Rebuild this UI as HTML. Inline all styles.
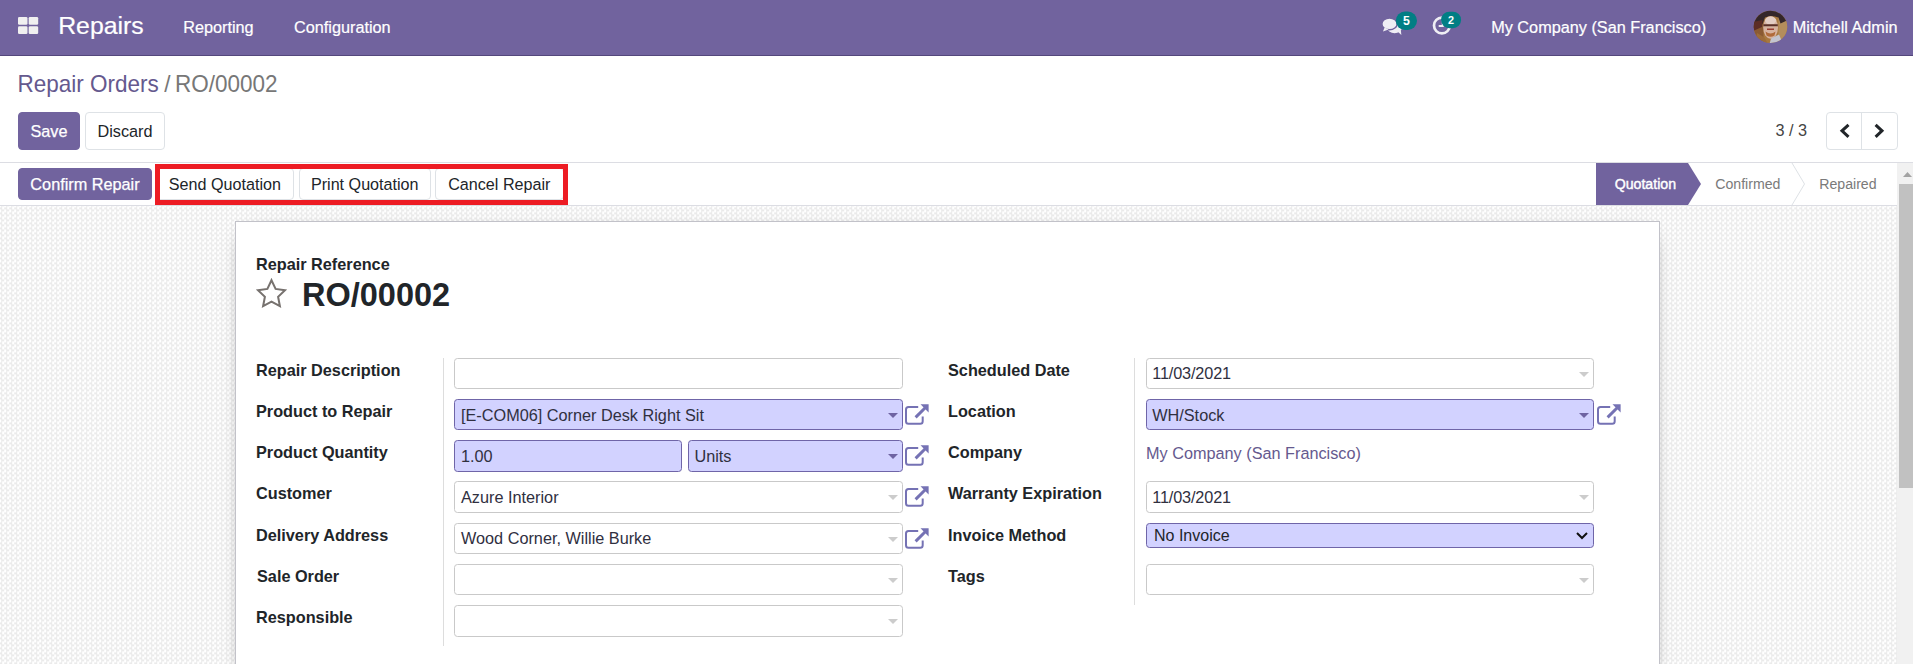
<!DOCTYPE html>
<html lang="en">
<head>
<meta charset="utf-8">
<title>Repair Orders - RO/00002</title>
<style>
*{box-sizing:border-box;margin:0;padding:0}
html,body{width:1913px;height:664px;overflow:hidden;background:#fff}
body{position:relative;font-family:"Liberation Sans",Arial,sans-serif;font-size:16.25px;color:#4c4c4c;line-height:1}
.abs,.t,.lbl,.inp,.btn{position:absolute;white-space:nowrap}
.t{line-height:1}
/* navbar */
#nav{position:absolute;left:0;top:0;width:1913px;height:56px;background:#71639e;border-bottom:1px solid #54477c}
#nav .t{color:#fff;font-size:16.25px;-webkit-text-stroke:0.2px #fff}
.badge{position:absolute;background:#017e84;color:#fff;font-weight:bold;font-size:12px;border-radius:10px;text-align:center;line-height:18px;height:18px}
/* control panel */
#cp{position:absolute;left:0;top:56px;width:1913px;height:107px;background:#fff;border-bottom:1px solid #dcdde3}
.btn{border-radius:4px;font-size:16.25px;text-align:center;border:1px solid transparent}
.btn-p{background:#71639e;color:#fff;border-color:#71639e;-webkit-text-stroke:0.25px #fff}
.btn-s{background:#fff;color:#212529;border-color:#dee2e6}
/* status bar */
#sb{position:absolute;left:0;top:163px;width:1897px;height:43px;background:#fff;border-bottom:1px solid #dcdde3}
/* content bg */
#bg{position:absolute;left:0;top:206px;width:1897px;height:458px;background-color:#fff;
background-image:conic-gradient(#ebebeb 25%,#fff 0 50%,#ebebeb 0 75%,#fff 0);
background-size:5px 5px;background-position:-0.8px 3.4px}
#sheet{position:absolute;left:235px;top:221px;width:1425px;height:460px;background:#fff;border:1px solid #c2c2c9;box-shadow:0 5px 20px -14px #000}
.lbl{font-weight:bold;color:#212529;font-size:16.25px}
.inp{height:31px;border:1px solid #c9c9c9;border-radius:3.5px;background:#fff;font-size:16.25px;color:#30303f;padding-left:6px;line-height:31px}
.req{background:#d2d2ff;border-color:#6f65a8}
.caret{position:absolute;right:4px;top:13px;width:0;height:0;border-left:5px solid transparent;border-right:5px solid transparent;border-top:5px solid #ccc}
.req .caret{border-top-color:#6e63a2}
.vsep{position:absolute;width:1px;background:#ddd}
svg{position:absolute;overflow:visible}
/* scrollbar */
#scr{position:absolute;left:1897px;top:163px;width:16px;height:501px;background:#f1f1f1}
#thumb{position:absolute;left:2px;top:21px;width:14px;height:304px;background:#c1c1c1}
</style>
</head>
<body>
<div id="nav">
  <svg style="left:18px;top:17px" width="20.2" height="17" viewBox="0 0 20.2 17"><g fill="#f0f0f0"><rect x="0" y="0" width="9.5" height="7.7" rx="1.3"/><rect x="10.7" y="0" width="9.5" height="7.7" rx="1.3"/><rect x="0" y="9.3" width="9.5" height="7.7" rx="1.3"/><rect x="10.7" y="9.3" width="9.5" height="7.7" rx="1.3"/></g></svg>
  <div class="t" style="left:58.2px;top:14.2px;font-size:24.8px">Repairs</div>
  <div class="t" style="left:183.2px;top:18.8px">Reporting</div>
  <div class="t" style="left:294px;top:18.8px">Configuration</div>

  <svg style="left:1375px;top:5px" width="100" height="45" viewBox="1375 5 100 45">
    <g fill="#efeef4">
      <ellipse cx="1394.6" cy="27.6" rx="7.3" ry="5.6"/>
      <path d="M1397.5 31.5 L1401.4 35 L1400.8 30 Z"/>
      <ellipse cx="1389.5" cy="23.9" rx="7.6" ry="5.9" stroke="#71639e" stroke-width="1.4"/>
      <path d="M1384.6 27.6 L1383 31.6 L1388.6 29.4 Z"/>
    </g>
    <circle cx="1441.9" cy="25.5" r="7.9" fill="none" stroke="#efeef4" stroke-width="2.7"/>
    <path d="M1442.8 20 V26.1 H1438.7" fill="none" stroke="#efeef4" stroke-width="2"/>
    <rect x="1395.8" y="11.6" width="21.2" height="18.4" rx="9.2" fill="#017e84"/>
    <rect x="1441.1" y="11.7" width="20" height="16.5" rx="8.25" fill="#017e84"/>
    <text x="1406.4" y="24.9" text-anchor="middle" font-family="Liberation Sans, Arial, sans-serif" font-weight="bold" font-size="12.3" fill="#fff">5</text>
    <text x="1451" y="24" text-anchor="middle" font-family="Liberation Sans, Arial, sans-serif" font-weight="bold" font-size="10.8" fill="#fff">2</text>
  </svg>
  <svg style="left:1753px;top:10px" width="35" height="34" viewBox="1753 10 35 34">
    <clipPath id="avc"><ellipse cx="1770.5" cy="26.9" rx="16.7" ry="16.1"/></clipPath>
    <g clip-path="url(#avc)">
      <rect x="1753" y="10" width="35" height="34" fill="#a8783f"/>
      <rect x="1753" y="10" width="10.5" height="34" fill="#8a5a33"/>
      <rect x="1778.5" y="16" width="10" height="28" fill="#b38d5c"/>
      <path d="M1753 10 H1788 V20 L1780.5 23.5 L1778.5 17.5 Q1771 14.5 1765 17.5 L1762.5 24 L1753 28 Z" fill="#33262a"/>
      <path d="M1753 22 L1762.5 20 L1762 27 L1753 31 Z" fill="#5c2d25"/>
      <ellipse cx="1770.6" cy="27.5" rx="7.4" ry="11.2" fill="#d6b3a0"/>
      <ellipse cx="1770.6" cy="20.5" rx="5.6" ry="4" fill="#e3cdc4"/>
      <path d="M1763.4 25.2 H1777.8" stroke="#5a3028" stroke-width="2"/>
      <path d="M1765.5 31.5 Q1770.5 35.5 1775.5 31.5 L1774.5 35.5 Q1770.5 38 1766.5 35.5 Z" fill="#b06a3a"/>
      <path d="M1767 29.2 H1774" stroke="#9a3f33" stroke-width="1.6"/>
      <path d="M1771 38.5 L1779 34.5 L1783 44 H1769.5 Z" fill="#c3c4cf"/>
      <path d="M1757 33 L1764.5 37.5 L1768 44 H1755 Z" fill="#9d6c3a"/>
    </g>
  </svg>
  <div class="t" style="left:1491.2px;top:18.8px">My Company (San Francisco)</div>
  <div class="t" style="left:1792.8px;top:18.8px">Mitchell Admin</div>
</div>

<div id="cp">
</div>
<div class="t" style="left:17.5px;top:73.1px;font-size:22.5px;color:#65598e;transform-origin:0 0;transform:scaleY(1.04)">Repair Orders</div>
<div class="t" style="left:164.2px;top:73.1px;font-size:22.5px;color:#777;transform-origin:0 0;transform:scaleY(1.04)">/</div>
<div class="t" style="left:175px;top:73.1px;font-size:22.5px;color:#777;transform-origin:0 0;transform:scaleY(1.04)">RO/00002</div>
<div class="btn btn-p" style="left:18px;top:112px;width:62px;height:38px;line-height:36px">Save</div>
<div class="btn btn-s" style="left:85px;top:112px;width:80px;height:38px;line-height:36px">Discard</div>
<div class="t" style="left:1775.4px;top:122.3px;font-size:16.25px;color:#444">3 / 3</div>
<div class="abs" style="left:1826px;top:112px;width:72px;height:38px;border:1px solid #dee2e6;border-radius:4px"></div>
<div class="abs" style="left:1861px;top:112px;width:1px;height:38px;background:#dee2e6"></div>
<svg style="left:1838px;top:122px" width="50" height="18" viewBox="1838 122 50 18"><g fill="none" stroke="#212529" stroke-width="3"><path d="M1848.5 124.8 L1842 130.8 L1848.5 136.8"/><path d="M1875.6 124.8 L1882 130.8 L1875.6 136.8"/></g></svg>

<div id="sb"></div>
<div class="btn btn-p" style="left:18px;top:168px;width:134px;height:32px;line-height:30px">Confirm Repair</div>
<div class="btn btn-s" style="left:155.7px;top:168px;width:138.5px;height:32px;line-height:30px;font-size:16.15px">Send Quotation</div>
<div class="btn btn-s" style="left:298.5px;top:168px;width:132.5px;height:32px;line-height:30px;font-size:16.15px">Print Quotation</div>
<div class="btn btn-s" style="left:434.8px;top:168px;width:129px;height:32px;line-height:30px;font-size:16.15px">Cancel Repair</div>
<div class="abs" style="left:155px;top:164px;width:413px;height:41px;border:5px solid #ed1c24"></div>
<svg style="left:1596px;top:163px" width="301" height="42" viewBox="1596 163 301 42">
  <path d="M1596 163 H1688 L1701 184 L1688 205 H1596 Z" fill="#71639e"/>
  <path d="M1792 163 L1804.5 184 L1792 205" fill="none" stroke="#dee2e6" stroke-width="1"/>
</svg>
<div class="t" style="left:1614.7px;top:176.9px;font-size:14.15px;color:#fff;-webkit-text-stroke:0.4px #fff">Quotation</div>
<div class="t" style="left:1715.2px;top:176.7px;font-size:14.15px;color:#7a7a7a">Confirmed</div>
<div class="t" style="left:1819.2px;top:176.7px;font-size:14.15px;color:#7a7a7a">Repaired</div>

<div id="bg"></div>
<div id="sheet"></div>


<!-- sheet content -->
<div class="lbl" style="left:256px;top:256px">Repair Reference</div>
<svg style="left:256px;top:278px" width="31" height="30" viewBox="0 0 31 30"><path d="M15.5 2.2 L19.6 10.9 L29 12.2 L22.1 18.8 L23.9 28.2 L15.5 23.6 L7.1 28.2 L8.9 18.8 L2 12.2 L11.4 10.9 Z" fill="none" stroke="#77726f" stroke-width="2" stroke-linejoin="miter"/></svg>
<div class="t" style="left:302px;top:278.3px;font-size:32.5px;font-weight:bold;color:#212529;transform-origin:0 0;transform:scaleY(1.04)">RO/00002</div>

<div class="vsep" style="left:443px;top:358px;height:288px"></div>
<div class="vsep" style="left:1134px;top:358px;height:247px"></div>

<div class="lbl" style="left:256px;top:362px">Repair Description</div>
<div class="lbl" style="left:256px;top:403.2px">Product to Repair</div>
<div class="lbl" style="left:256px;top:444.4px">Product Quantity</div>
<div class="lbl" style="left:256px;top:484.7px">Customer</div>
<div class="lbl" style="left:256px;top:526.8px">Delivery Address</div>
<div class="lbl" style="left:257px;top:568px">Sale Order</div>
<div class="lbl" style="left:256px;top:609.2px">Responsible</div>

<div class="inp" style="left:454px;top:358px;width:449px"></div>
<div class="inp req" style="left:454px;top:399px;width:449px">[E-COM06] Corner Desk Right Sit<i class="caret"></i></div>
<div class="inp req" style="left:454px;top:440px;width:228px;height:32px">1.00</div>
<div class="inp req" style="left:688px;top:440px;width:215px;height:32px;padding-left:5.4px">Units<i class="caret"></i></div>
<div class="inp" style="left:454px;top:481px;width:449px;height:32px">Azure Interior<i class="caret"></i></div>
<div class="inp" style="left:454px;top:523.4px;width:449px;height:30.4px;line-height:29px">Wood Corner, Willie Burke<i class="caret"></i></div>
<div class="inp" style="left:454px;top:564.4px;width:449px;height:30.6px"><i class="caret"></i></div>
<div class="inp" style="left:454px;top:605px;width:449px;height:32px"><i class="caret"></i></div>

<div class="lbl" style="left:948px;top:362px">Scheduled Date</div>
<div class="lbl" style="left:948px;top:403.2px">Location</div>
<div class="lbl" style="left:948px;top:444.4px">Company</div>
<div class="lbl" style="left:948px;top:484.7px">Warranty Expiration</div>
<div class="lbl" style="left:948px;top:526.8px">Invoice Method</div>
<div class="lbl" style="left:948px;top:568px">Tags</div>

<div class="inp" style="left:1146px;top:358px;width:448px;padding-left:5.3px;line-height:29px;letter-spacing:-0.15px">11/03/2021<i class="caret"></i></div>
<div class="inp req" style="left:1146px;top:399px;width:448px;padding-left:5.2px">WH/Stock<i class="caret"></i></div>
<div class="t" style="left:1146px;top:444.6px;color:#65598e">My Company (San Francisco)</div>
<div class="inp" style="left:1146px;top:481px;width:448px;height:32px;padding-left:5.3px;letter-spacing:-0.15px">11/03/2021<i class="caret"></i></div>
<div class="inp req" style="left:1146px;top:523px;width:448px;height:25px;line-height:23px;padding-left:7px;color:#212529;font-size:16px">No Invoice</div>
<svg style="left:1576px;top:532px" width="12" height="8" viewBox="0 0 12 8"><path d="M1 1 L6 6 L11 1" fill="none" stroke="#111" stroke-width="2"/></svg>
<div class="inp" style="left:1146px;top:564.4px;width:448px;height:30.4px"><i class="caret"></i></div>

<svg style="left:903.3px;top:399.1px" width="30" height="31" viewBox="903.3 399.1 30 31"><path d="M918.5 407.1 H908.8 Q906.3 407.1 906.3 409.6 V421.4 Q906.3 423.9 908.8 423.9 H920.5 Q923.0 423.9 923.0 421.4 V416.5" fill="none" stroke="#7572b4" stroke-width="2"/><path d="M915.9 417.5 L926.3 407.1" fill="none" stroke="#7572b4" stroke-width="3"/><path d="M920.8 404.3 H928.9 V412.5 Z" fill="#7572b4"/></svg>
<svg style="left:903.3px;top:440.3px" width="30" height="31" viewBox="903.3 440.3 30 31"><path d="M918.5 448.3 H908.8 Q906.3 448.3 906.3 450.8 V462.6 Q906.3 465.1 908.8 465.1 H920.5 Q923.0 465.1 923.0 462.6 V457.7" fill="none" stroke="#7572b4" stroke-width="2"/><path d="M915.9 458.7 L926.3 448.3" fill="none" stroke="#7572b4" stroke-width="3"/><path d="M920.8 445.5 H928.9 V453.7 Z" fill="#7572b4"/></svg>
<svg style="left:903.3px;top:481.3px" width="30" height="31" viewBox="903.3 481.3 30 31"><path d="M918.5 489.3 H908.8 Q906.3 489.3 906.3 491.8 V503.6 Q906.3 506.1 908.8 506.1 H920.5 Q923.0 506.1 923.0 503.6 V498.7" fill="none" stroke="#7572b4" stroke-width="2"/><path d="M915.9 499.7 L926.3 489.3" fill="none" stroke="#7572b4" stroke-width="3"/><path d="M920.8 486.5 H928.9 V494.7 Z" fill="#7572b4"/></svg>
<svg style="left:903.3px;top:523px" width="30" height="31" viewBox="903.3 523 30 31"><path d="M918.5 531.0 H908.8 Q906.3 531.0 906.3 533.5 V545.3 Q906.3 547.8 908.8 547.8 H920.5 Q923.0 547.8 923.0 545.3 V540.4" fill="none" stroke="#7572b4" stroke-width="2"/><path d="M915.9 541.4 L926.3 531.0" fill="none" stroke="#7572b4" stroke-width="3"/><path d="M920.8 528.2 H928.9 V536.4 Z" fill="#7572b4"/></svg>
<svg style="left:1595.2px;top:399.1px" width="30" height="31" viewBox="1595.2 399.1 30 31"><path d="M1610.4 407.1 H1600.7 Q1598.2 407.1 1598.2 409.6 V421.4 Q1598.2 423.9 1600.7 423.9 H1612.4 Q1614.9 423.9 1614.9 421.4 V416.5" fill="none" stroke="#7572b4" stroke-width="2"/><path d="M1607.8 417.5 L1618.2 407.1" fill="none" stroke="#7572b4" stroke-width="3"/><path d="M1612.7 404.3 H1620.8 V412.5 Z" fill="#7572b4"/></svg>
<div id="scr"><div id="thumb"></div>
<svg style="left:6px;top:9px" width="9" height="5" viewBox="0 0 9 5"><path d="M0 5 L4.5 0 L9 5 Z" fill="#a3a3a3"/></svg>
</div>
</body>
</html>
